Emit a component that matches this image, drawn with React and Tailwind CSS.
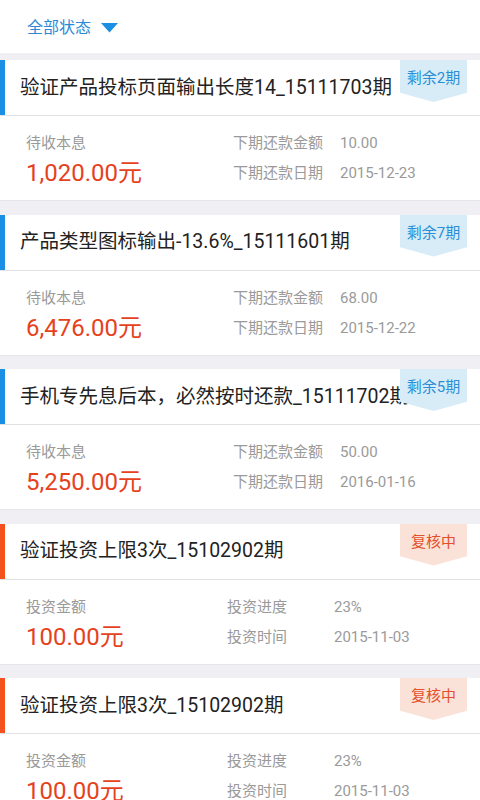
import React from "react";

const repay = [
  { title: "验证产品投标页面输出长度14_15111703期", badge: "剩余2期", amount: "1,020.00元", v1: "10.00", v2: "2015-12-23" },
  { title: "产品类型图标输出-13.6%_15111601期", badge: "剩余7期", amount: "6,476.00元", v1: "68.00", v2: "2015-12-22" },
  { title: "手机专先息后本，必然按时还款_15111702期", badge: "剩余5期", amount: "5,250.00元", v1: "50.00", v2: "2016-01-16" },
];

const invest = [
  { title: "验证投资上限3次_15102902期", badge: "复核中", amount: "100.00元", v1: "23%", v2: "2015-11-03" },
  { title: "验证投资上限3次_15102902期", badge: "复核中", amount: "100.00元", v1: "23%", v2: "2015-11-03" },
];

function Card({ item, kind }) {
  const isRepay = kind === "repay";
  return (
    <div className="relative bg-white border-b border-[#e6e6ea]">
      <div className="relative flex h-[56px] items-center border-b border-[#e2e2e6]">
        <div className={"absolute left-0 top-0 h-[55px] w-[5px] " + (isRepay ? "bg-[#1a8fe3]" : "bg-[#f5511e]")} />
        <div className="pl-[20px] whitespace-nowrap overflow-hidden text-[19.5px] text-[#222222]">{item.title}</div>
        <div
          className={
            "absolute right-[13px] top-0 h-[42px] w-[67px] text-center text-[15px] leading-[37px] [clip-path:polygon(0_0,100%_0,100%_78%,50%_100%,0_78%)] " +
            (isRepay ? "bg-[#d8ecf8] text-[#2a8fd6]" : "bg-[#fbe2d9] text-[#e4502a]")
          }
        >
          {item.badge}
        </div>
      </div>
      <div className="flex h-[84px] pt-[12px]">
        <div className={"pl-[26px] " + (isRepay ? "w-[233px]" : "w-[227px]")}>
          <div className="h-[30px] leading-[30px] text-[15px] text-[#9a9a9a]">{isRepay ? "待收本息" : "投资金额"}</div>
          <div className="h-[30px] leading-[30px] text-[24px] text-[#e5421c]">{item.amount}</div>
        </div>
        <div className="text-[15px] text-[#9a9a9a]">
          <div className="flex h-[30px] leading-[30px]">
            <div className="w-[107px]">{isRepay ? "下期还款金额" : "投资进度"}</div>
            <div>{item.v1}</div>
          </div>
          <div className="flex h-[30px] leading-[30px]">
            <div className="w-[107px]">{isRepay ? "下期还款日期" : "投资时间"}</div>
            <div>{item.v2}</div>
          </div>
        </div>
      </div>
    </div>
  );
}

export default function App() {
  return (
    <div
      className="w-[480px] h-[800px] overflow-hidden bg-[#efeff4]"
      style={{ fontFamily: 'Roboto, "Noto Sans CJK SC", sans-serif' }}
    >
      <div className="flex h-[53px] items-center bg-white pl-[27px] pt-[3px]">
        <span className="text-[16px] text-[#2b8ad6]">全部状态</span>
        <svg className="ml-[10px]" width="17" height="10" viewBox="0 0 17 10">
          <polygon points="0,0 17,0 8.5,9.5" fill="#1a8fe3" />
        </svg>
      </div>
      <div className="flex flex-col gap-[13.5px] pt-[7px]">
        {repay.map((it, i) => (
          <Card key={"r" + i} item={it} kind="repay" />
        ))}
        {invest.map((it, i) => (
          <Card key={"i" + i} item={it} kind="invest" />
        ))}
      </div>
    </div>
  );
}
